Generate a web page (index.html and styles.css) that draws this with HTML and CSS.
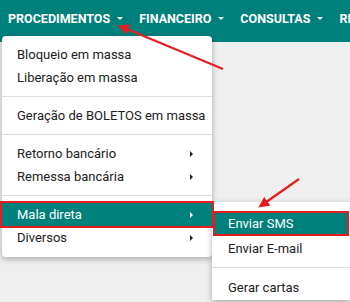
FILE: index.html
```html
<!DOCTYPE html>
<html lang="pt-BR">
<head>
  <meta charset="UTF-8">
  <title>Procedimentos</title>
  <meta name="viewport" content="width=device-width, initial-scale=1">
  <link rel="stylesheet" href="styles.css">
</head>
<body>
  <nav class="topbar">
    <a class="nav-item">PROCEDIMENTOS <span class="caret"></span></a>
    <a class="nav-item">FINANCEIRO <span class="caret"></span></a>
    <a class="nav-item">CONSULTAS <span class="caret"></span></a>
    <a class="nav-item">RELATÓRIOS <span class="caret"></span></a>
  </nav>

  <ul class="menu">
    <li class="menu-item">Bloqueio em massa</li>
    <li class="menu-item">Liberação em massa</li>
    <li class="divider"></li>
    <li class="menu-item">Geração de BOLETOS em massa</li>
    <li class="divider"></li>
    <li class="menu-item has-sub">Retorno bancário</li>
    <li class="menu-item has-sub">Remessa bancária</li>
    <li class="divider"></li>
    <li class="menu-item has-sub active marked">Mala direta</li>
    <li class="menu-item has-sub">Diversos</li>
  </ul>

  <ul class="menu submenu">
    <li class="menu-item active marked">Enviar SMS</li>
    <li class="menu-item">Enviar E-mail</li>
    <li class="divider"></li>
    <li class="menu-item">Gerar cartas</li>
  </ul>

  <!-- annotation arrows -->
  <svg class="arrows" width="350" height="302" viewBox="0 0 350 302">
    <defs>
      <marker id="head" markerWidth="5" markerHeight="5" refX="3" refY="2.5" orient="auto" markerUnits="strokeWidth">
        <path d="M0,0 L5,2.5 L0,5 Z" fill="#e41e20"/>
      </marker>
    </defs>
    <line x1="223" y1="69" x2="122" y2="27" stroke="#e41e20" stroke-width="2.2" marker-end="url(#head)"/>
    <line x1="299" y1="179" x2="262" y2="205" stroke="#e41e20" stroke-width="2.2" marker-end="url(#head)"/>
  </svg>
</body>
</html>
```

FILE: styles.css
```css
body {
  margin: 0;
  background: #efefef;
  font-family: Roboto, "Liberation Sans", sans-serif;
  overflow: hidden;
}

/*===============================
Top bar
=============*/

.topbar {
  height: 42px;
  background: #00807b;
  display: flex;
  align-items: flex-start;
  white-space: nowrap;
  overflow: hidden;
}

.nav-item {
  display: flex;
  align-items: center;
  padding: 11px 8px 0;
  color: #fff;
  font-weight: bold;
  font-size: 12.5px;
  line-height: 15px;
}

.caret {
  width: 0;
  height: 0;
  margin-left: 7px;
  border-left: 3px solid transparent;
  border-right: 3px solid transparent;
  border-top: 3px solid #fff;
}

/*===============================
Dropdowns
=============*/

.menu {
  position: absolute;
  left: 2px;
  top: 36px;
  width: 210px;
  margin: 0;
  padding: 7px 0 8px;
  list-style: none;
  background: #fff;
  border-radius: 4px;
  box-shadow: 0 2px 6px rgba(0, 0, 0, 0.3);
}

.menu-item {
  position: relative;
  height: 23px;
  line-height: 23px;
  padding: 0 15px;
  font-size: 13px;
  color: #212121;
  white-space: nowrap;
}

.has-sub::after {
  content: "";
  position: absolute;
  right: 19px;
  top: 9px;
  border-top: 3px solid transparent;
  border-bottom: 3px solid transparent;
  border-left: 3px solid #212121;
}

.divider {
  height: 1px;
  margin: 7px 0;
  background: #dcdcdc;
}

.active {
  background: #00807b;
  color: #fff;
}

.active.has-sub::after {
  border-left-color: #fff;
}

.marked {
  outline: 2px solid #e41e20;
  z-index: 1;
}

.submenu {
  left: 212px;
  top: 202px;
  width: 138px;
  padding: 9px 0 0;
  border-radius: 4px 0 0 0;
}

.submenu .menu-item {
  height: 25px;
  line-height: 25px;
  padding: 0 16px;
}

.submenu .marked {
  outline-offset: -2px;
  margin: 0 1px;
  padding-left: 15px;
}

.submenu .divider {
  margin: 6px 0 7px;
}

.arrows {
  position: absolute;
  left: 0;
  top: 0;
  z-index: 2;
}
```
